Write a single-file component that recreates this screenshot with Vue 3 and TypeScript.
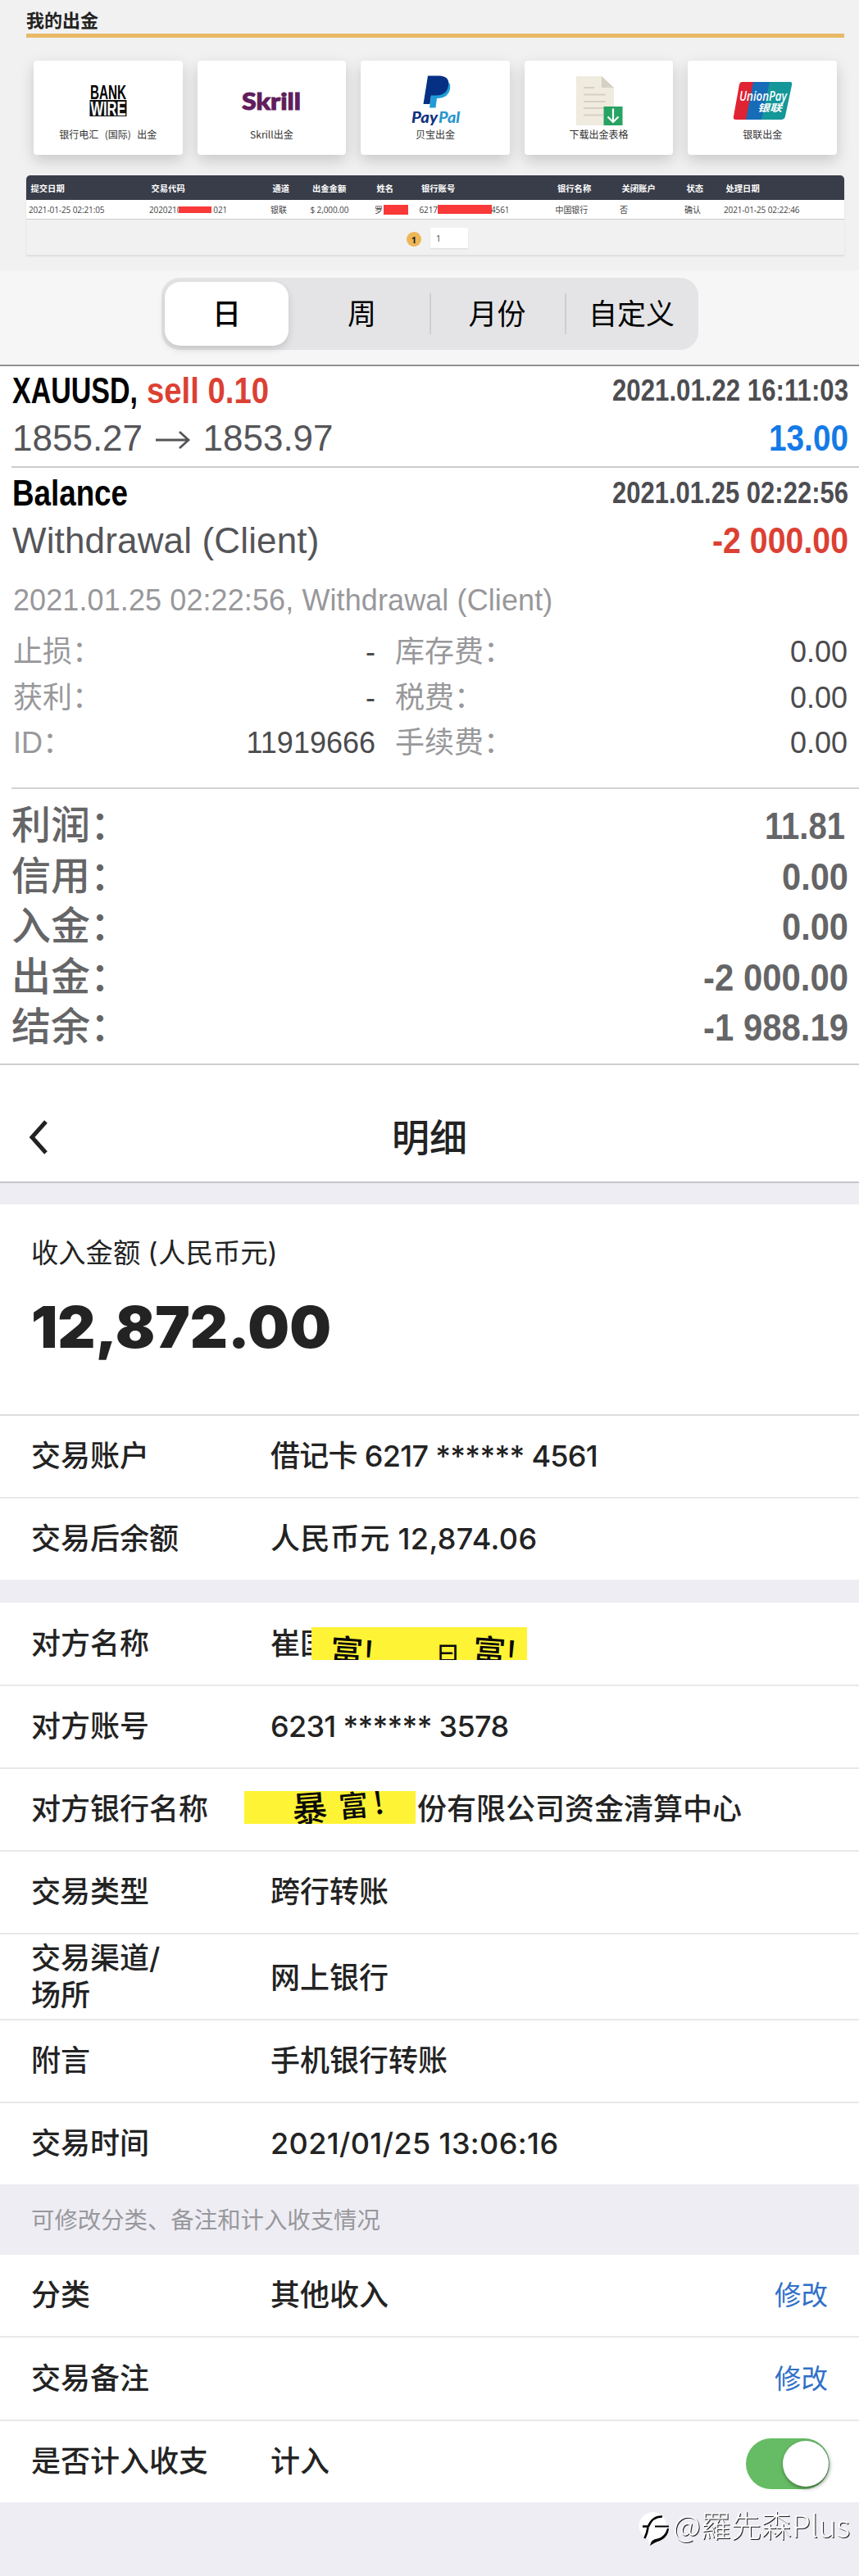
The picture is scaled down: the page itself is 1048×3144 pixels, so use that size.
<script setup lang="ts">
import { h, type FunctionalComponent } from 'vue'

interface FitProps {
  text: string
  width: number
  size: number
  lift?: number
}

// Text condensed to a fixed width; the bottom edge of the svg is the baseline.
const FitText: FunctionalComponent<FitProps> = (props) => {
  const base = Math.round(props.size * 0.72)
  return h('svg', { width: props.width, height: base, style: { fontSize: props.size + 'px' } }, [
    h(
      'text',
      { x: 0, y: base - (props.lift ?? 0), textLength: props.width, lengthAdjust: 'spacingAndGlyphs', fill: 'currentColor' },
      props.text
    )
  ])
}
FitText.props = ['text', 'width', 'size', 'lift']

const headers: string[] = ['提交日期', '交易代码', '通道', '出金金额', '姓名', '银行账号', '银行名称', '关闭账户', '状态', '处理日期']
const tabs: string[] = ['日', '周', '月份', '自定义']

interface Detail { label: string; value: string; label2: string; value2: string }
const details: Detail[] = [
  { label: '止损：', value: '-', label2: '库存费：', value2: '0.00' },
  { label: '获利：', value: '-', label2: '税费：', value2: '0.00' },
  { label: 'ID：', value: '11919666', label2: '手续费：', value2: '0.00' }
]

interface Total { label: string; value: string; width: number; inset?: boolean }
const totals: Total[] = [
  { label: '利润：', value: '11.81', width: 98, inset: true },
  { label: '信用：', value: '0.00', width: 81 },
  { label: '入金：', value: '0.00', width: 81 },
  { label: '出金：', value: '-2 000.00', width: 177 },
  { label: '结余：', value: '-1 988.19', width: 177 }
]
</script>

<template>
  <main class="page">
    <section class="portal">
      <h1>我的出金</h1>
      <div class="cards">
        <div class="card">
          <svg class="logo" width="60" height="62" viewBox="0 0 60 62">
            <rect x="7.500" y="30" width="45" height="20" fill="#111" />
            <text x="8" y="29" textLength="44" lengthAdjust="spacingAndGlyphs" class="wire" fill="#000">BANK</text>
            <text x="8.500" y="48.500" textLength="43" lengthAdjust="spacingAndGlyphs" class="wire" fill="#fff">WIRE</text>
          </svg>
          <span class="spaced">银行电汇&nbsp;&nbsp;(国际)&nbsp;&nbsp;出金</span>
        </div>
        <div class="card">
          <svg class="logo" width="76" height="62" viewBox="0 0 76 62">
            <text x="2" y="42" textLength="72" lengthAdjust="spacingAndGlyphs" class="skrill">Skrill</text>
          </svg>
          <span>Skrill出金</span>
        </div>
        <div class="card">
          <svg class="logo" width="64" height="62" viewBox="0 0 64 62">
            <path d="M30 5h12q10 3 8 12-2 10-14 11h-2l-1.500 11.500H25z" fill="#1f9cd8" />
            <path d="M23 .5h15q12 1 10 12-2 12-15 12h-6L25.500 35h-8z" fill="#063083" />
            <text x="3" y="57.500" textLength="32" lengthAdjust="spacingAndGlyphs" class="paypal" fill="#123180">Pay</text>
            <text x="36" y="57.500" textLength="26" lengthAdjust="spacingAndGlyphs" class="paypal" fill="#2796ce">Pal</text>
          </svg>
          <span>贝宝出金</span>
        </div>
        <div class="card">
          <svg class="logo" width="60" height="62" viewBox="0 0 60 62">
            <path d="M2 1h31l15 14v46H2z" fill="#efebde" />
            <path d="M33 1l15 14H33z" fill="#d5d1c3" />
            <path d="M11 15h13M11 23.500h27M11 32h27M11 40h27M11 48.500h24" stroke="#d5d0c2" stroke-width="2" />
            <rect x="35.500" y="38" width="23" height="23" fill="#27a363" />
            <path d="M47 40.500v16M40.500 50.500l6.500 6.500 6.500-6.500" fill="none" stroke="#fff" stroke-width="2.200" />
          </svg>
          <span>下载出金表格</span>
        </div>
        <div class="card">
          <svg class="logo" width="74" height="62" viewBox="0 0 74 62">
            <path d="M12 8h15L18 54H5q-4 0-3-4L9 11q1-3 3-3z" fill="#e02332" />
            <path d="M26 8h22L38 54H17z" fill="#176cb8" />
            <path d="M46 8h25q3 0 2 4l-8 38q-1 4-5 4H36z" fill="#149799" />
            <text x="9" y="31" textLength="58" lengthAdjust="spacingAndGlyphs" class="union">UnionPay</text>
            <text x="31" y="43.500" textLength="30" lengthAdjust="spacingAndGlyphs" class="union-cn">银联</text>
          </svg>
          <span>银联出金</span>
        </div>
      </div>
      <div class="table">
        <div class="tr head"><b v-for="name in headers" :key="name">{{ name }}</b></div>
        <div class="tr body">
          <span>2021-01-25 02:21:05</span>
          <span class="masked"><em>2020210</em><i class="bar code" /><em>021</em></span>
          <span>银联</span>
          <span>$ 2,000.00</span>
          <span class="masked"><em>罗</em><i class="bar name" /></span>
          <span class="masked"><em>6217</em><i class="bar number" /><em>4561</em></span>
          <span>中国银行</span>
          <span>否</span>
          <span>确认</span>
          <span>2021-01-25 02:22:46</span>
        </div>
        <div class="pager"><b>1</b><span class="input">1</span></div>
      </div>
    </section>

    <nav class="filter">
      <div class="segments">
        <div v-for="(tab, i) in tabs" :key="tab" class="segment" :class="{ active: i === 0, divided: i > 1 }">{{ tab }}</div>
      </div>
    </nav>

    <section class="history">
      <article class="deal">
        <div class="line">
          <span class="pair">
            <FitText class="bold black" text="XAUUSD," :width="153" :size="44" />
            <FitText class="bold red" text="sell 0.10" :width="149" :size="44" />
          </span>
          <FitText class="bold date" text="2021.01.22 16:11:03" :width="288" :size="36" :lift="3" />
        </div>
        <div class="line">
          <span class="price">1855.27
            <svg width="44" height="28" viewBox="0 0 44 28"><path d="M1 15h40M30 5l11 10-11 10" fill="none" stroke="currentColor" stroke-width="2.800" /></svg>
            1853.97</span>
          <FitText class="bold blue" text="13.00" :width="97" :size="44" />
        </div>
      </article>
      <article class="deal last">
        <div class="line">
          <FitText class="bold black" text="Balance" :width="141" :size="44" />
          <FitText class="bold date" text="2021.01.25 02:22:56" :width="288" :size="36" :lift="3" />
        </div>
        <div class="line">
          <span class="note-text">Withdrawal (Client)</span>
          <FitText class="bold red" text="-2 000.00" :width="166" :size="44" />
        </div>
      </article>
      <div class="details">
        <p>2021.01.25 02:22:56, Withdrawal (Client)</p>
        <div v-for="d in details" :key="d.label" class="detail">
          <span>{{ d.label }}</span><b>{{ d.value }}</b>
          <span class="second">{{ d.label2 }}</span><b>{{ d.value2 }}</b>
        </div>
      </div>
      <div class="totals">
        <div v-for="t in totals" :key="t.label" class="total">
          <span>{{ t.label }}</span>
          <FitText class="bold" :class="{ inset: t.inset }" :text="t.value" :width="t.width" :size="46" />
        </div>
      </div>
    </section>

    <section class="bank">
      <header>
        <svg width="26" height="44" viewBox="0 0 26 44"><path d="M22 3L5 22l17 19" fill="none" stroke="#222" stroke-width="5" /></svg>
        <h2>明细</h2>
      </header>
      <div class="band" />
      <div class="amount">
        <span>收入金额<i>(</i>人民币元<i class="close">)</i></span>
        <FitText class="sum" text="12,872.00" :width="366" :size="70" />
      </div>
      <div class="row first"><label>交易账户</label><span class="stars">借记卡 6217 ****** 4561</span></div>
      <div class="row end"><label>交易后余额</label><span class="wide">人民币元 12,874.06</span></div>
      <div class="band small" />
      <div class="row tall">
        <label>对方名称</label>
        <span class="cover">崔国<i class="note one"><em class="n1">富!</em><em class="n2">曰</em><em class="n3">富!</em></i></span>
      </div>
      <div class="row"><label>对方账号</label><span class="stars">6231 ****** 3578</span></div>
      <div class="row">
        <label>对方银行名称</label>
        <span class="cover shifted">份有限公司资金清算中心<i class="note two"><em class="m1">暴</em><em class="m2">富</em><em class="m3">!</em></i></span>
      </div>
      <div class="row"><label>交易类型</label><span>跨行转账</span></div>
      <div class="row double"><label>交易渠道/<br>场所</label><span>网上银行</span></div>
      <div class="row"><label>附言</label><span>手机银行转账</span></div>
      <div class="row end"><label>交易时间</label><span class="wide">2021/01/25 13:06:16</span></div>
      <div class="hint">可修改分类、备注和计入收支情况</div>
      <div class="row"><label>分类</label><span>其他收入</span><a>修改</a></div>
      <div class="row tall"><label>交易备注</label><span /><a>修改</a></div>
      <div class="row end"><label>是否计入收支</label><span>计入</span><div class="toggle" /></div>
      <footer>
        <svg width="40" height="46" viewBox="0 0 40 46">
          <path d="M19 1a18 17 0 0 0-9 32l4 1 4-12 16-5A18 17 0 0 0 19 1z" fill="#fff" />
          <path d="M10 17h26q-1 14-13 18l-10 6z" fill="#fff" />
          <path d="M5 18.500h7Q17 6 29 6.500M11.500 20q-1 7-4 13" fill="none" stroke="#000" stroke-width="2.600" />
          <path d="M20 17.500h17v2H20zM37 21q-1 12-14 16-5 2-9 5 1-8 9-8.500 9-2 12-12.500z" fill="#000" />
        </svg>
        <FitText class="mark" text="@羅先森Plus" :width="216" :size="37" />
      </footer>
    </section>
  </main>
</template>

<style>
body { background: #fff; }
</style>

<style scoped>
* { box-sizing: border-box; }
.page { width: 1048px; height: 3144px; overflow: hidden; display: flex; flex-direction: column; background: #fff; font-family: "Liberation Sans", "Noto Sans CJK SC", sans-serif; }
h1, h2, p { margin: 0; }
i, em { font-style: normal; }
svg { display: block; overflow: visible; flex: none; }

.portal { height: 330px; flex: none; background: #f1f1f1; padding: 8px 18px 0 32px; font-family: "Open Sans", "Noto Sans CJK SC", sans-serif; }
h1 { height: 38px; font: bold 22px/31px "Noto Sans CJK SC", sans-serif; color: #222; border-bottom: 5px solid #e8b967; }
.cards { display: grid; grid-template-columns: repeat(5, 1fr); gap: 18px; padding: 0 9px; margin-top: 27.500px; }
.card { height: 115px; background: #fff; border-radius: 4px; box-shadow: 0 7px 18px rgba(0, 0, 0, .17); display: flex; flex-direction: column; align-items: center; padding-top: 18px; font-size: 12px; color: #333; }
.card span { line-height: 20px; font-family: "Noto Sans CJK SC", sans-serif; white-space: nowrap; }
.card .spaced { word-spacing: 1px; }
.wire { font: bold 24px "Liberation Sans", sans-serif; }
.skrill { font: 900 29px Lato, sans-serif; fill: #611d5c; stroke: #611d5c; stroke-width: 1px; }
.paypal { font: italic 900 18px Lato, sans-serif; }
.union { font: italic 600 16px "Open Sans", sans-serif; fill: #fff; }
.union-cn { font: italic bold 12px "Noto Sans CJK SC", sans-serif; fill: #fff; }

.table { margin-top: 25.500px; height: 98px; border-radius: 5px 5px 0 0; overflow: hidden; border-bottom: 1px solid #ddd; box-shadow: 0 1px 3px rgba(0, 0, 0, .08); font-size: 10.300px; color: #444; }
.tr { display: grid; grid-template-columns: 147px 148px 48.500px 78.500px 54.500px 166px 78.500px 79px 48px 1fr; align-items: center; white-space: nowrap; }
.head { height: 30px; background: #393d49; color: #fff; padding-left: 5.500px; font-family: "Noto Sans CJK SC", sans-serif; }
.body { height: 24px; background: #fff; padding-left: 3px; border-bottom: 1px solid #ccc; font-size: 10px; letter-spacing: -.1px; }
.masked { display: flex; align-items: center; }
.bar { background: #f93838; flex: none; }
.bar.code { width: 40px; height: 8px; margin: 0 2px 0 -3px; }
.bar.name { width: 30px; height: 12px; margin-left: 1px; }
.bar.number { width: 66px; height: 11px; margin-right: -1px; }
.pager { display: flex; align-items: center; height: 43px; padding-left: 464px; padding-top: 4px; }
.pager b { width: 18px; height: 18px; border-radius: 50%; background: #edb657; color: #222; text-align: center; font-size: 11px; line-height: 19px; }
.input { width: 46px; height: 25px; margin-left: 11px; margin-top: -3px; background: #fff; padding-left: 7px; line-height: 26px; box-shadow: 0 1px 1px #ddd; }

.filter { height: 117px; flex: none; background: #f6f6f6; border-bottom: 2px solid #929292; padding: 9px 0 0 197px; }
.segments { width: 655px; height: 88px; border-radius: 22px; background: #e4e4e6; padding: 5px 0 5px 4px; display: flex; }
.segment { position: relative; width: 165px; text-align: center; font: 35px/74px "Noto Sans CJK SC", sans-serif; color: #000; }
.segment.active { width: 151px; margin-right: 7px; background: #fff; border-radius: 19px; box-shadow: 0 4px 10px rgba(0, 0, 0, .14); font-weight: 500; }
.segment.divided::before { content: ""; position: absolute; left: 0; top: 14px; width: 2px; height: 50px; background: #cecfd1; }
.segment:last-child { width: 163px; }

.history { height: 853px; flex: none; padding-left: 14px; border-bottom: 2px solid #cfcfcf; color: #555559; }
.deal { height: 124px; border-bottom: 2px solid #ccc; padding: 1px 13px 0 0; font-size: 44px; line-height: 58px; }
.deal.last { height: 118px; border: 0; padding-top: 2px; }
.line { height: 58px; display: flex; justify-content: space-between; align-items: baseline; white-space: nowrap; }
.line::before { content: "\200b"; width: 1px; }
.line > :nth-child(1) { margin-right: auto; }
.note-text { letter-spacing: .15px; }
.pair { display: flex; gap: 11px; align-items: baseline; }
.bold { font-weight: bold; }
.black { color: #000; }
.red { color: #dc4033; }
.blue { color: #147ae6; }
.date { color: #4d4d51; }
.price svg { display: inline-block; vertical-align: baseline; margin: 0 2px 0 3px; }
.details { height: 274px; padding: 16px 14px 0 2px; border-bottom: 2px solid #d2d2d2; font-size: 36px; color: #98989b; }
.details p { line-height: 56px; margin-bottom: 7px; letter-spacing: .1px; }
.detail { height: 55.500px; line-height: 55.500px; display: grid; grid-template-columns: 221px 221px 290px 1fr; white-space: nowrap; }
.detail b { text-align: right; font-weight: normal; color: #4b4b4d; }
.detail .second { padding-left: 24px; }
.totals { padding: 14px 13px 0 0; color: #656567; font-size: 48px; }
.total { height: 61.500px; line-height: 61.500px; display: flex; align-items: baseline; justify-content: space-between; font-weight: 500; }
.total .inset { margin-right: 4px; }

.bank { height: 1844px; flex: none; background: #fff; color: #232323; font-family: Inter, "Noto Sans CJK SC", sans-serif; font-size: 36px; }
header { height: 144px; display: flex; align-items: center; padding: 34px 36px 0 34px; border-bottom: 2px solid #c6c5cb; }
h2 { flex: 1; margin-right: 24px; text-align: center; font-size: 46px; line-height: 60px; font-weight: 500; }
.band { height: 26px; background: #eeedf4; }
.band.small { height: 28px; }
.amount { height: 258px; border-bottom: 2px solid #dcdcdc; padding: 39px 38px; }
.amount span { display: block; height: 40px; font-size: 33.300px; line-height: 40px; white-space: nowrap; }
.amount i { padding: 0 1px 0 9px; }
.amount .close { padding: 0; }
.sum { margin-top: 46px; font-weight: 900; }
.row { height: 101px; display: flex; align-items: center; padding: 0 38px; border-bottom: 2px solid #e8e8ea; line-height: 45px; white-space: nowrap; font-weight: 500; }
.row label { width: 292px; flex: none; }
.row span { flex: 1; }
.row .wide { letter-spacing: .38px; }
.row .stars { letter-spacing: -.7px; }
.row.tall { height: 102px; }
.row.double { height: 105px; }
.row.double span { padding-top: 4px; }
.row.end { height: 99px; border: 0; }
.row a { color: #3070c8; font-size: 32.500px; font-weight: 400; }
.row .cover { position: relative; }
.row .shifted { padding-left: 179px; }
.note { position: absolute; overflow: hidden; height: 40px; background: #fff335; color: #090909; }
.note em { position: absolute; font-family: "Noto Sans CJK SC", sans-serif; font-weight: 500; line-height: 50px; }
.note.one { left: 50px; top: 2px; width: 263px; }
.note.two { left: -32px; top: 0; width: 209px; }
.n1, .n3 { font-size: 40px; transform: rotate(4deg); }
.n1 { left: 23px; top: 3px; }
.n2 { left: 153px; top: 6px; font-size: 27px; }
.n3 { left: 197px; top: 3px; }
.m1 { left: 58px; top: -7px; font-size: 43px; transform: rotate(-4deg); }
.m2 { left: 115px; top: -10px; font-size: 36px; transform: rotate(-5deg); }
.m3 { left: 157px; top: -13px; font-size: 38px; transform: rotate(-8deg); }
.hint { height: 86px; background: #eeedf4; color: #98989b; padding: 0 38px; font-size: 28.400px; line-height: 87px; }
.toggle { width: 102px; height: 62px; border-radius: 31px; background: #66bc64; margin-right: -2px; padding: 3px 1px 3px 45px; margin-top: 4px; }
.toggle::after { content: ""; display: block; width: 56px; height: 56px; border-radius: 50%; background: #fff; box-shadow: 1px 2px 5px rgba(0, 0, 0, .45); }
footer { height: 90px; background: #eeedf4; display: flex; padding: 11px 10px 0 779px; gap: 2px; }
.mark { margin-top: 5px; color: #fff; font-family: "Noto Sans CJK TC", sans-serif; font-weight: 300; filter: drop-shadow(1px 1px 0 #222); }
</style>
